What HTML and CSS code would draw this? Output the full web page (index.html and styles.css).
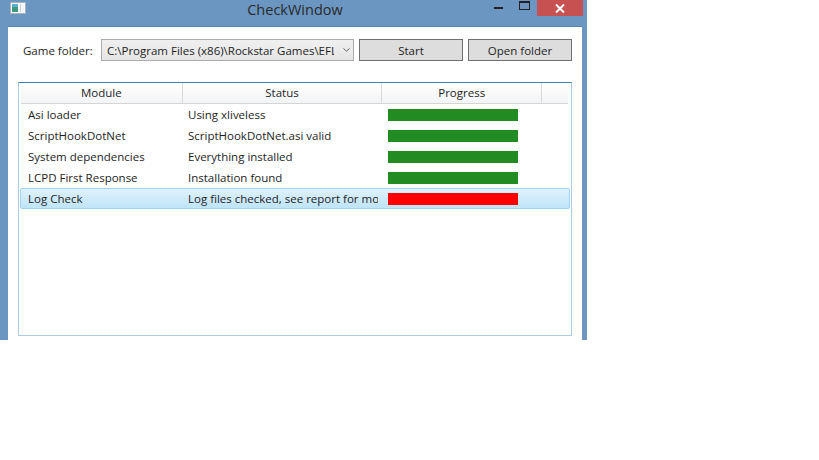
FILE: index.html
```html
<!DOCTYPE html>
<html lang="en">

<head>
    <meta charset="UTF-8">
    <meta name="viewport" content="width=device-width, initial-scale=1.0">
    <title>CheckWindow</title>

    <link rel="stylesheet" href="styles.css">
</head>

<body>
    <div class="window">
        <div class="titlebar">
            <div class="app-icon">
                <svg width="16" height="12" viewBox="0 0 16 12">
                    <rect x="0.5" y="0.5" width="15" height="11" fill="#f4f6f8" stroke="#a9b4bf"/>
                    <rect x="2" y="2" width="6" height="8" fill="#3d9a7a"/>
                    <rect x="2" y="2" width="6" height="3" fill="#5ab0d8"/>
                    <rect x="10" y="2" width="1" height="8" fill="#c9d2db"/>
                </svg>
            </div>
            <div class="title">CheckWindow</div>
            <div class="controls">
                <span class="ctl min"><svg width="9" height="10" viewBox="0 0 9 10"><rect x="0" y="7" width="9" height="2" fill="#222"/></svg></span>
                <span class="ctl max"><svg width="11" height="9" viewBox="0 0 11 9"><rect x="0.5" y="0.5" width="10" height="8" fill="none" stroke="#222"/><rect x="0" y="0" width="11" height="2" fill="#222"/></svg></span>
                <span class="ctl close"><svg width="10" height="9" viewBox="0 0 10 9"><path d="M1 0.5 L9 8.5 M9 0.5 L1 8.5" stroke="#fff" stroke-width="2"/></svg></span>
            </div>
        </div>

        <div class="client">
            <div class="toolbar">
                <label class="lbl">Game folder:</label>
                <div class="combo">
                    <span class="combo-text">C:\Program Files (x86)\Rockstar Games\EFLC</span>
                    <svg class="combo-arrow" width="7" height="4" viewBox="0 0 7 4"><path d="M0.5 0.5 L3.5 3.2 L6.5 0.5" fill="none" stroke="#606060"/></svg>
                </div>
                <a class="btn btn-start" href="javascript:;">Start</a>
                <a class="btn btn-open" href="javascript:;">Open folder</a>
            </div>

            <div class="listview">
                <div class="lv-header">
                    <div class="col c-module">Module</div>
                    <div class="col c-status">Status</div>
                    <div class="col c-progress">Progress</div>
                    <div class="col c-fill"></div>
                </div>
                <div class="lv-row">
                    <div class="cell c-module"><span class="txt">Asi loader</span></div>
                    <div class="cell c-status"><span class="txt">Using xliveless</span></div>
                    <div class="cell c-progress"><div class="bar ok"></div></div>
                </div>
                <div class="lv-row">
                    <div class="cell c-module"><span class="txt">ScriptHookDotNet</span></div>
                    <div class="cell c-status"><span class="txt">ScriptHookDotNet.asi valid</span></div>
                    <div class="cell c-progress"><div class="bar ok"></div></div>
                </div>
                <div class="lv-row">
                    <div class="cell c-module"><span class="txt">System dependencies</span></div>
                    <div class="cell c-status"><span class="txt">Everything installed</span></div>
                    <div class="cell c-progress"><div class="bar ok"></div></div>
                </div>
                <div class="lv-row">
                    <div class="cell c-module"><span class="txt">LCPD First Response</span></div>
                    <div class="cell c-status"><span class="txt">Installation found</span></div>
                    <div class="cell c-progress"><div class="bar ok"></div></div>
                </div>
                <div class="lv-row selected">
                    <div class="cell c-module"><span class="txt">Log Check</span></div>
                    <div class="cell c-status"><span class="txt">Log files checked, see report for more details</span></div>
                    <div class="cell c-progress"><div class="bar fail"></div></div>
                </div>
            </div>
        </div>
    </div>
</body>

</html>
```

FILE: styles.css
```css
* {
    margin: 0;
    padding: 0;
    box-sizing: border-box;
}

body {
    background-color: #fff;
    font-family: "Open Sans", "Liberation Sans", sans-serif;
    font-size: 11.5px;
    color: #1e1e1e;
}

a {
    text-decoration: none;
    color: #1e1e1e;
}

.window {
    width: 587px;
    height: 340px;
    padding: 0 5px 0 8px;
    background-color: #6b96c2;
    display: flex;
    flex-direction: column;
}

.titlebar {
    height: 26px;
    margin-left: -8px;
    margin-right: -5px;
    display: grid;
    grid-template-columns: 1fr auto 1fr;
    align-items: start;
}

.titlebar .app-icon {
    padding: 2px 0 0 10px;
    height: 16px;
}

.titlebar .title {
    font-size: 14.5px;
    line-height: 20px;
    color: #2a2a2a;
    padding-left: 3px;
}

.controls {
    display: flex;
    justify-content: flex-end;
    padding-right: 4px;
}

.ctl {
    display: flex;
    justify-content: center;
    height: 16px;
}

.ctl.min {
    width: 26px;
}

.ctl.max {
    width: 26px;
    padding-top: 1px;
}

.ctl.close {
    width: 46px;
    background-color: #c75050;
    padding-top: 4px;
}

.client {
    flex: 1;
    background-color: #fff;
    border-top: 1px solid #5a84b0;
}

.toolbar {
    display: flex;
    align-items: center;
    height: 22px;
    margin: 12px 10px 0 10px;
}

.lbl {
    padding-left: 5px;
    width: 83px;
}

.combo {
    width: 253px;
    height: 22px;
    border: 1px solid #acacac;
    background: linear-gradient(#f0f0f0, #e5e5e5);
    display: flex;
    align-items: center;
    padding-left: 5px;
    overflow: hidden;
}

.combo-text {
    white-space: nowrap;
    overflow: hidden;
    width: 227px;
}

.combo-arrow {
    margin-left: 9px;
    flex-shrink: 0;
}

.btn {
    height: 22px;
    border: 1px solid #707070;
    background-color: #dddddd;
    display: flex;
    align-items: center;
    justify-content: center;
    margin-left: 5px;
    width: 104px;
}

.listview {
    margin: 21px 10px 0 10px;
    height: 254px;
    border: 1px solid #abcbe3;
    border-top-color: #3c7fb1;
    padding: 0 1px 0 1px;
}

.lv-header {
    display: flex;
    height: 21px;
    margin: 0 2px 0 1px;
    border-bottom: 1px solid #d5d5d5;
    background: linear-gradient(#ffffff, #f3f4f6);
}

.lv-header .col {
    text-align: center;
    line-height: 20px;
    border-right: 1px solid #d9d9d9;
}

.c-module {
    width: 160px;
}

.c-status {
    width: 200px;
}

.c-progress {
    width: 160px;
}

.lv-header .c-module {
    width: 162px;
}

.lv-header .c-fill {
    width: 26px;
    border-right: none;
}

.lv-row {
    display: flex;
    height: 21px;
    align-items: center;
    border: 1px solid transparent;
    padding-left: 1px;
}

.lv-row.selected {
    background: linear-gradient(#dff1fc, #bfe4f8);
    border-color: #9fd3f1;
    border-radius: 2px;
}

.cell {
    padding: 0 4px 0 6px;
    line-height: 19px;
}

.cell .txt {
    display: block;
    white-space: nowrap;
    overflow: hidden;
}

.bar {
    width: 130px;
    height: 12px;
}

.bar.ok {
    background-color: #228b22;
}

.bar.fail {
    background-color: #ff0000;
}
```
